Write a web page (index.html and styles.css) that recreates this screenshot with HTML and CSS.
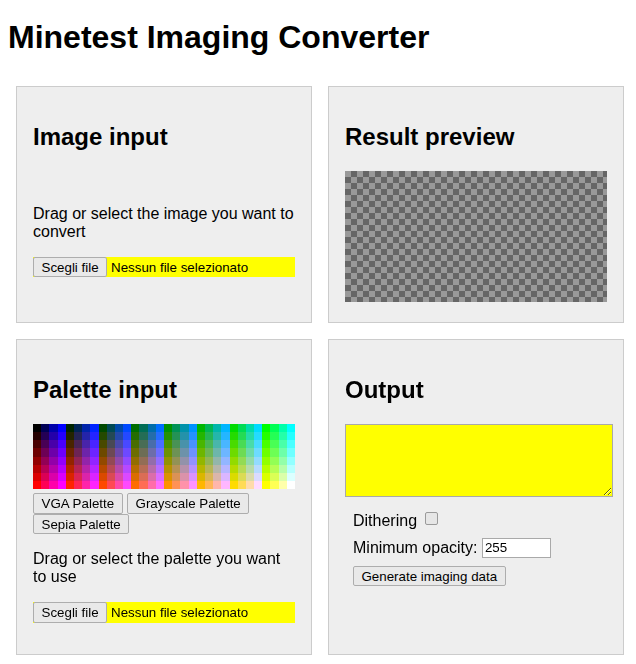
FILE: index.html
```html
<!DOCTYPE html>
<html lang="it">
<head>
<meta charset="utf-8">
<title>Minetest Imaging Converter</title>
<link rel="stylesheet" href="styles.css">
</head>
<body>
<h1>Minetest Imaging Converter</h1>
<main class="grid">
  <section class="panel">
    <h2>Image input</h2>
    <div class="holder"><canvas class="source" width="0" height="0"></canvas></div>
    <p>Drag or select the image you want to convert</p>
    <label class="file"><span class="btn">Scegli file</span><span class="fname">Nessun file selezionato</span><input type="file" class="hidden-input"></label>
  </section>
  <section class="panel">
    <h2>Result preview</h2>
    <div class="holder"><canvas class="preview" width="262" height="131"></canvas></div>
  </section>
  <section class="panel panel-tall">
    <h2>Palette input</h2>
    <div class="holder"><canvas id="palette" class="palette" width="32" height="8"></canvas></div>
    <div class="presets"><button type="button">VGA Palette</button> <button type="button">Grayscale Palette</button> <button type="button">Sepia Palette</button></div>
    <p>Drag or select the palette you want to use</p>
    <label class="file"><span class="btn">Scegli file</span><span class="fname">Nessun file selezionato</span><input type="file" class="hidden-input"></label>
  </section>
  <section class="panel panel-tall">
    <h2>Output</h2>
    <textarea class="out"></textarea>
    <div class="opts">
      <label class="row">Dithering <input type="checkbox" class="check"></label>
      <label class="row">Minimum opacity: <input type="text" class="num" value="255"></label>
      <button type="button" class="gen">Generate imaging data</button>
    </div>
  </section>
</main>
<script src="script.js"></script>
</body>
</html>
```

FILE: styles.css
```css
body {
  margin: 8px;
  font-family: "Liberation Sans", Arial, sans-serif;
  font-size: 16px;
  color: #000;
  background: #fff;
}

h1 {
  font-size: 32px;
  font-weight: bold;
  line-height: normal;
  margin: 11px 0 30px;
}

.grid {
  display: grid;
  grid-template-columns: 296px 296px;
  column-gap: 16px;
  row-gap: 16px;
  padding: 0 8px;
}

.panel {
  box-sizing: border-box;
  background: #eee;
  border: 1px solid #ccc;
  padding: 16px;
}

.panel-tall {
  min-height: 316px;
}

h2 {
  font-size: 24px;
  font-weight: bold;
  line-height: normal;
  margin: 19.92px 0;
}

p {
  margin: 16px 0;
  line-height: normal;
}

.holder {
  line-height: normal;
}

.preview {
  width: 262px;
  height: 131px;
  background-color: #999;
  background-image: conic-gradient(#666 0 25%, #999 0 50%, #666 0 75%, #999 0);
  background-size: 12px 12px;
  background-position: 0 0;
}

.palette {
  width: 262px;
  height: 65.5px;
  image-rendering: pixelated;
}

button,
.btn {
  font-family: "Liberation Sans", Arial, sans-serif;
  font-size: 13.333px;
  line-height: normal;
  color: #000;
  background: #e9e9e9;
  border: 1px solid #adadad;
  border-radius: 2px;
  padding: 2px 7.5px 1.5px;
  margin: 0;
}

.btn {
  display: inline-block;
}

.file {
  display: flex;
  align-items: center;
  width: 262px;
  background: #ff0;
}

.fname {
  font-size: 13.333px;
  margin-left: 4px;
}

.hidden-input {
  display: none;
}

.out {
  display: block;
  box-sizing: border-box;
  width: 268px;
  height: 73px;
  margin: 0;
  padding: 2px;
  border: 1px solid #a9a9a9;
  background: #ff0;
  font-family: "Liberation Mono", monospace;
  font-size: 13.333px;
}

.opts {
  display: flex;
  flex-direction: column;
  align-items: flex-start;
  gap: 8px;
  padding-left: 8px;
  margin-top: 12px;
}

.row {
  line-height: normal;
}

.check {
  appearance: none;
  -webkit-appearance: none;
  box-sizing: border-box;
  width: 13px;
  height: 13px;
  margin: 3px 3px 3px 4px;
  vertical-align: -2px;
  border: 1px solid #9a9a9a;
  border-radius: 2px;
  background: #e6e6e6;
}

.num {
  box-sizing: border-box;
  width: 69px;
  height: 20px;
  margin: 0;
  padding: 1px 2px;
  border: 1px solid #a9a9a9;
  background: #fff;
  font-family: "Liberation Sans", Arial, sans-serif;
  font-size: 13.333px;
  color: #000;
}

.gen {
  margin-top: 0;
}
```

FILE: script.js
```js
(function () {
  var canvas = document.getElementById('palette');
  var ctx = canvas.getContext('2d');
  var lv3 = [0, 36, 73, 109, 146, 182, 219, 255];
  var lv2 = [0, 85, 170, 255];
  for (var r = 0; r < 8; r++) {
    for (var g = 0; g < 8; g++) {
      for (var b = 0; b < 4; b++) {
        ctx.fillStyle = 'rgb(' + lv3[r] + ',' + lv3[g] + ',' + lv2[b] + ')';
        ctx.fillRect(g * 4 + b, r, 1, 1);
      }
    }
  }
})();
```
